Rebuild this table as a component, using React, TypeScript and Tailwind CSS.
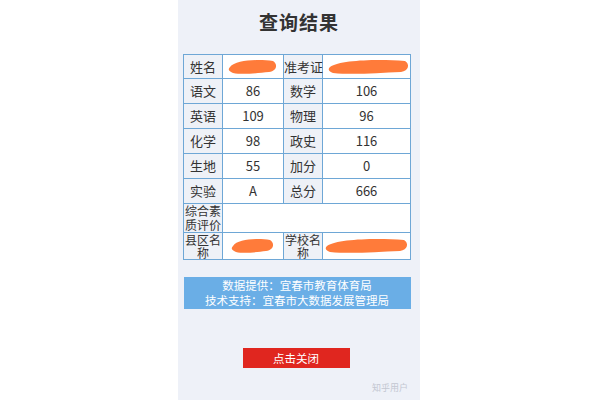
import React from "react";

const Scribble = ({ w }: { w: number }) => (
  <svg width={w} height="18" viewBox={`0 0 ${w} 18`} className="block mx-auto">
    <path
      d={`M2 9 C ${w * 0.15} 2, ${w * 0.6} 1, ${w - 5} 3 C ${w} 6, ${w - 1} 13, ${w - 9} 14 C ${w * 0.6} 15, ${w * 0.3} 17, 5 15 C 0 13, 0 11, 2 9 Z`}
      fill="#ff7b3a"
    />
  </svg>
);

const rows: [string, string, string, string][] = [
  ["语文", "86", "数学", "106"],
  ["英语", "109", "物理", "96"],
  ["化学", "98", "政史", "116"],
  ["生地", "55", "加分", "0"],
  ["实验", "A", "总分", "666"],
];

const label = "border border-[#6ea7d6] bg-[#eef1f7] text-center text-[13px] text-[#333] font-normal";
const value = "border border-[#6ea7d6] bg-white text-center text-[13px] text-[#333]";

const Two = ({ a, b, lh }: { a: string; b: string; lh: string }) => (
  <div className={"flex flex-col items-center text-[12px] whitespace-nowrap " + lh}>
    <span>{a}</span>
    <span>{b}</span>
  </div>
);

export default function App() {
  return (
    <div
      className="w-[600px] h-[400px] bg-white flex justify-center overflow-hidden"
      style={{ fontFamily: '"Noto Sans CJK SC", "Noto Sans", sans-serif' }}
    >
      <div className="w-[242px] ml-[-2px] h-full bg-[#eef1f8] flex flex-col items-center relative">
        <h1 className="mt-[9px] text-[19px] font-bold text-[#333] leading-[26px] tracking-[1px]">查询结果</h1>

        <table className="mt-[19px] border-collapse table-fixed w-[227px] ml-[-4px]">
          <colgroup>
            <col className="w-[39px]" />
            <col className="w-[61px]" />
            <col className="w-[39px]" />
            <col className="w-[88px]" />
          </colgroup>
          <tbody>
            <tr className="h-[24px]">
              <td className={label}>姓名</td>
              <td className={value + " px-1"}>
                <Scribble w={50} />
              </td>
              <td className={label + " text-[12px] whitespace-nowrap"}>准考证</td>
              <td className={value + " pl-1"}>
                <Scribble w={82} />
              </td>
            </tr>
            {rows.map((r) => (
              <tr key={r[0]} className="h-[25px]">
                <td className={label}>{r[0]}</td>
                <td className={value}>{r[1]}</td>
                <td className={label}>{r[2]}</td>
                <td className={value}>{r[3]}</td>
              </tr>
            ))}
            <tr className="h-[28px]">
              <td className={label}>
                <Two a="综合素" b="质评价" lh="leading-[14px]" />
              </td>
              <td className={value} colSpan={3}></td>
            </tr>
            <tr className="h-[26px]">
              <td className={label}>
                <Two a="县区名" b="称" lh="leading-[13px]" />
              </td>
              <td className={value}>
                <Scribble w={44} />
              </td>
              <td className={label}>
                <Two a="学校名" b="称" lh="leading-[13px]" />
              </td>
              <td className={value}>
                <Scribble w={84} />
              </td>
            </tr>
          </tbody>
        </table>

        <div className="mt-[17px] w-[227px] ml-[-4px] h-[32px] bg-[#6aaee6] flex flex-col items-center justify-center text-white text-[11.5px] leading-[15px]">
          <span>数据提供：宜春市教育体育局</span>
          <span>技术支持：宜春市大数据发展管理局</span>
        </div>

        <button className="mt-[39px] w-[107px] h-[20px] bg-[#e0261f] text-white text-[11.5px] leading-[20px] ml-[-6px]">
          点击关闭
        </button>

        <span className="absolute right-[12px] bottom-[6px] text-[9px] text-[#c3c7d2]">知乎用户</span>
      </div>
    </div>
  );
}
